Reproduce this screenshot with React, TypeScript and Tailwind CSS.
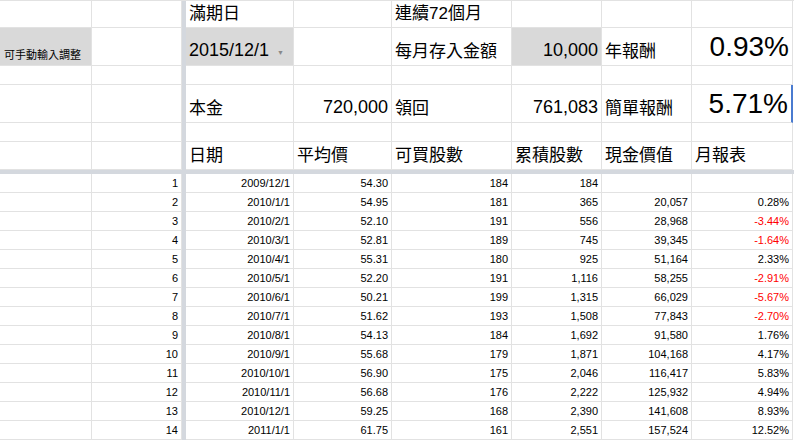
import React from "react";

const cols = "grid-cols-[92px_90px_4px_108px_98px_120px_90px_90px_101px]";
const font = { fontFamily: '"Liberation Sans", Arial, "Noto Sans CJK TC", sans-serif' };

const data: [string, string, string, string, string, string][] = [
  ["2009/12/1", "54.30", "184", "184", "", ""],
  ["2010/1/1", "54.95", "181", "365", "20,057", "0.28%"],
  ["2010/2/1", "52.10", "191", "556", "28,968", "-3.44%"],
  ["2010/3/1", "52.81", "189", "745", "39,345", "-1.64%"],
  ["2010/4/1", "55.31", "180", "925", "51,164", "2.33%"],
  ["2010/5/1", "52.20", "191", "1,116", "58,255", "-2.91%"],
  ["2010/6/1", "50.21", "199", "1,315", "66,029", "-5.67%"],
  ["2010/7/1", "51.62", "193", "1,508", "77,843", "-2.70%"],
  ["2010/8/1", "54.13", "184", "1,692", "91,580", "1.76%"],
  ["2010/9/1", "55.68", "179", "1,871", "104,168", "4.17%"],
  ["2010/10/1", "56.90", "175", "2,046", "116,417", "5.83%"],
  ["2010/11/1", "56.68", "176", "2,222", "125,932", "4.94%"],
  ["2010/12/1", "59.25", "168", "2,390", "141,608", "8.93%"],
  ["2011/1/1", "61.75", "161", "2,551", "157,524", "12.52%"],
];

const C = ({ children, className = "" }: { children?: React.ReactNode; className?: string }) => (
  <div className={`border-r border-b border-[#e2e2e2] overflow-hidden whitespace-nowrap ${className}`}>{children}</div>
);
const Freeze = () => <div className="bg-[#d4d8de]" />;

export default function App() {
  const big = "text-[17px] text-black flex items-end px-[3px] pb-[1px]";
  return (
    <div className="w-[794px] h-[442px] bg-white overflow-hidden text-[#222]" style={font}>
      <div className={`grid ${cols} grid-rows-[27px_38px_19px_38px_19px_28px] border-t border-[#e2e2e2]`}>
        <C /><C /><Freeze />
        <C className={big}>滿期日</C><C />
        <C className={big}>連續72個月</C><C /><C /><C />
        <C className="bg-[#d9d9d9] text-[11px] text-black flex items-end px-[4px] pb-[2px]">可手動輸入調整</C>
        <C /><Freeze />
        <C className={`${big} bg-[#d9d9d9] !text-[18px] items-end`}>
          2015/12/1<span className="ml-auto mb-[6px] mr-[6px] text-[7px] text-[#888]">▼</span>
        </C>
        <C />
        <C className={big}>每月存入金額</C>
        <C className={`${big} bg-[#d9d9d9] justify-end !text-[18px]`}>10,000</C>
        <C className={big}>年報酬</C>
        <C className="text-[28px] leading-[30px] text-black flex items-end justify-end px-[3px] pb-[3px]">0.93%</C>
        <C /><C /><Freeze /><C /><C /><C /><C /><C /><C />
        <C /><C /><Freeze />
        <C className={big}>本金</C>
        <C className={`${big} justify-end !text-[18px]`}>720,000</C>
        <C className={big}>領回</C>
        <C className={`${big} justify-end !text-[18px]`}>761,083</C>
        <C className={big}>簡單報酬</C>
        <C className="text-[28px] leading-[30px] text-black flex items-end justify-end px-[3px] pb-[3px] border-r-2 border-r-[#4a7bd0]">5.71%</C>
        <C /><C /><Freeze /><C /><C /><C /><C /><C /><C />
        <C /><C /><Freeze />
        <C className={big}>日期</C><C className={big}>平均價</C><C className={big}>可買股數</C>
        <C className={big}>累積股數</C><C className={big}>現金價值</C><C className={big}>月報表</C>
      </div>
      <div className="h-[4px] bg-[#d4d8de]" />
      <div className={`grid ${cols} auto-rows-[19px] text-[11px] text-black`}>
        {data.map((r, i) => (
          <React.Fragment key={i}>
            <C />
            <C className="text-right px-[3px] leading-[18px]">{i + 1}</C>
            <Freeze />
            <C className="text-right px-[3px] leading-[18px]">{r[0]}</C>
            <C className="text-right px-[3px] leading-[18px]">{r[1]}</C>
            <C className="text-right px-[3px] leading-[18px]">{r[2]}</C>
            <C className="text-right px-[3px] leading-[18px]">{r[3]}</C>
            <C className="text-right px-[3px] leading-[18px]">{r[4]}</C>
            <C className={`text-right px-[3px] leading-[18px] ${r[5].startsWith("-") ? "text-[#ff0000]" : ""}`}>{r[5]}</C>
          </React.Fragment>
        ))}
      </div>
    </div>
  );
}
